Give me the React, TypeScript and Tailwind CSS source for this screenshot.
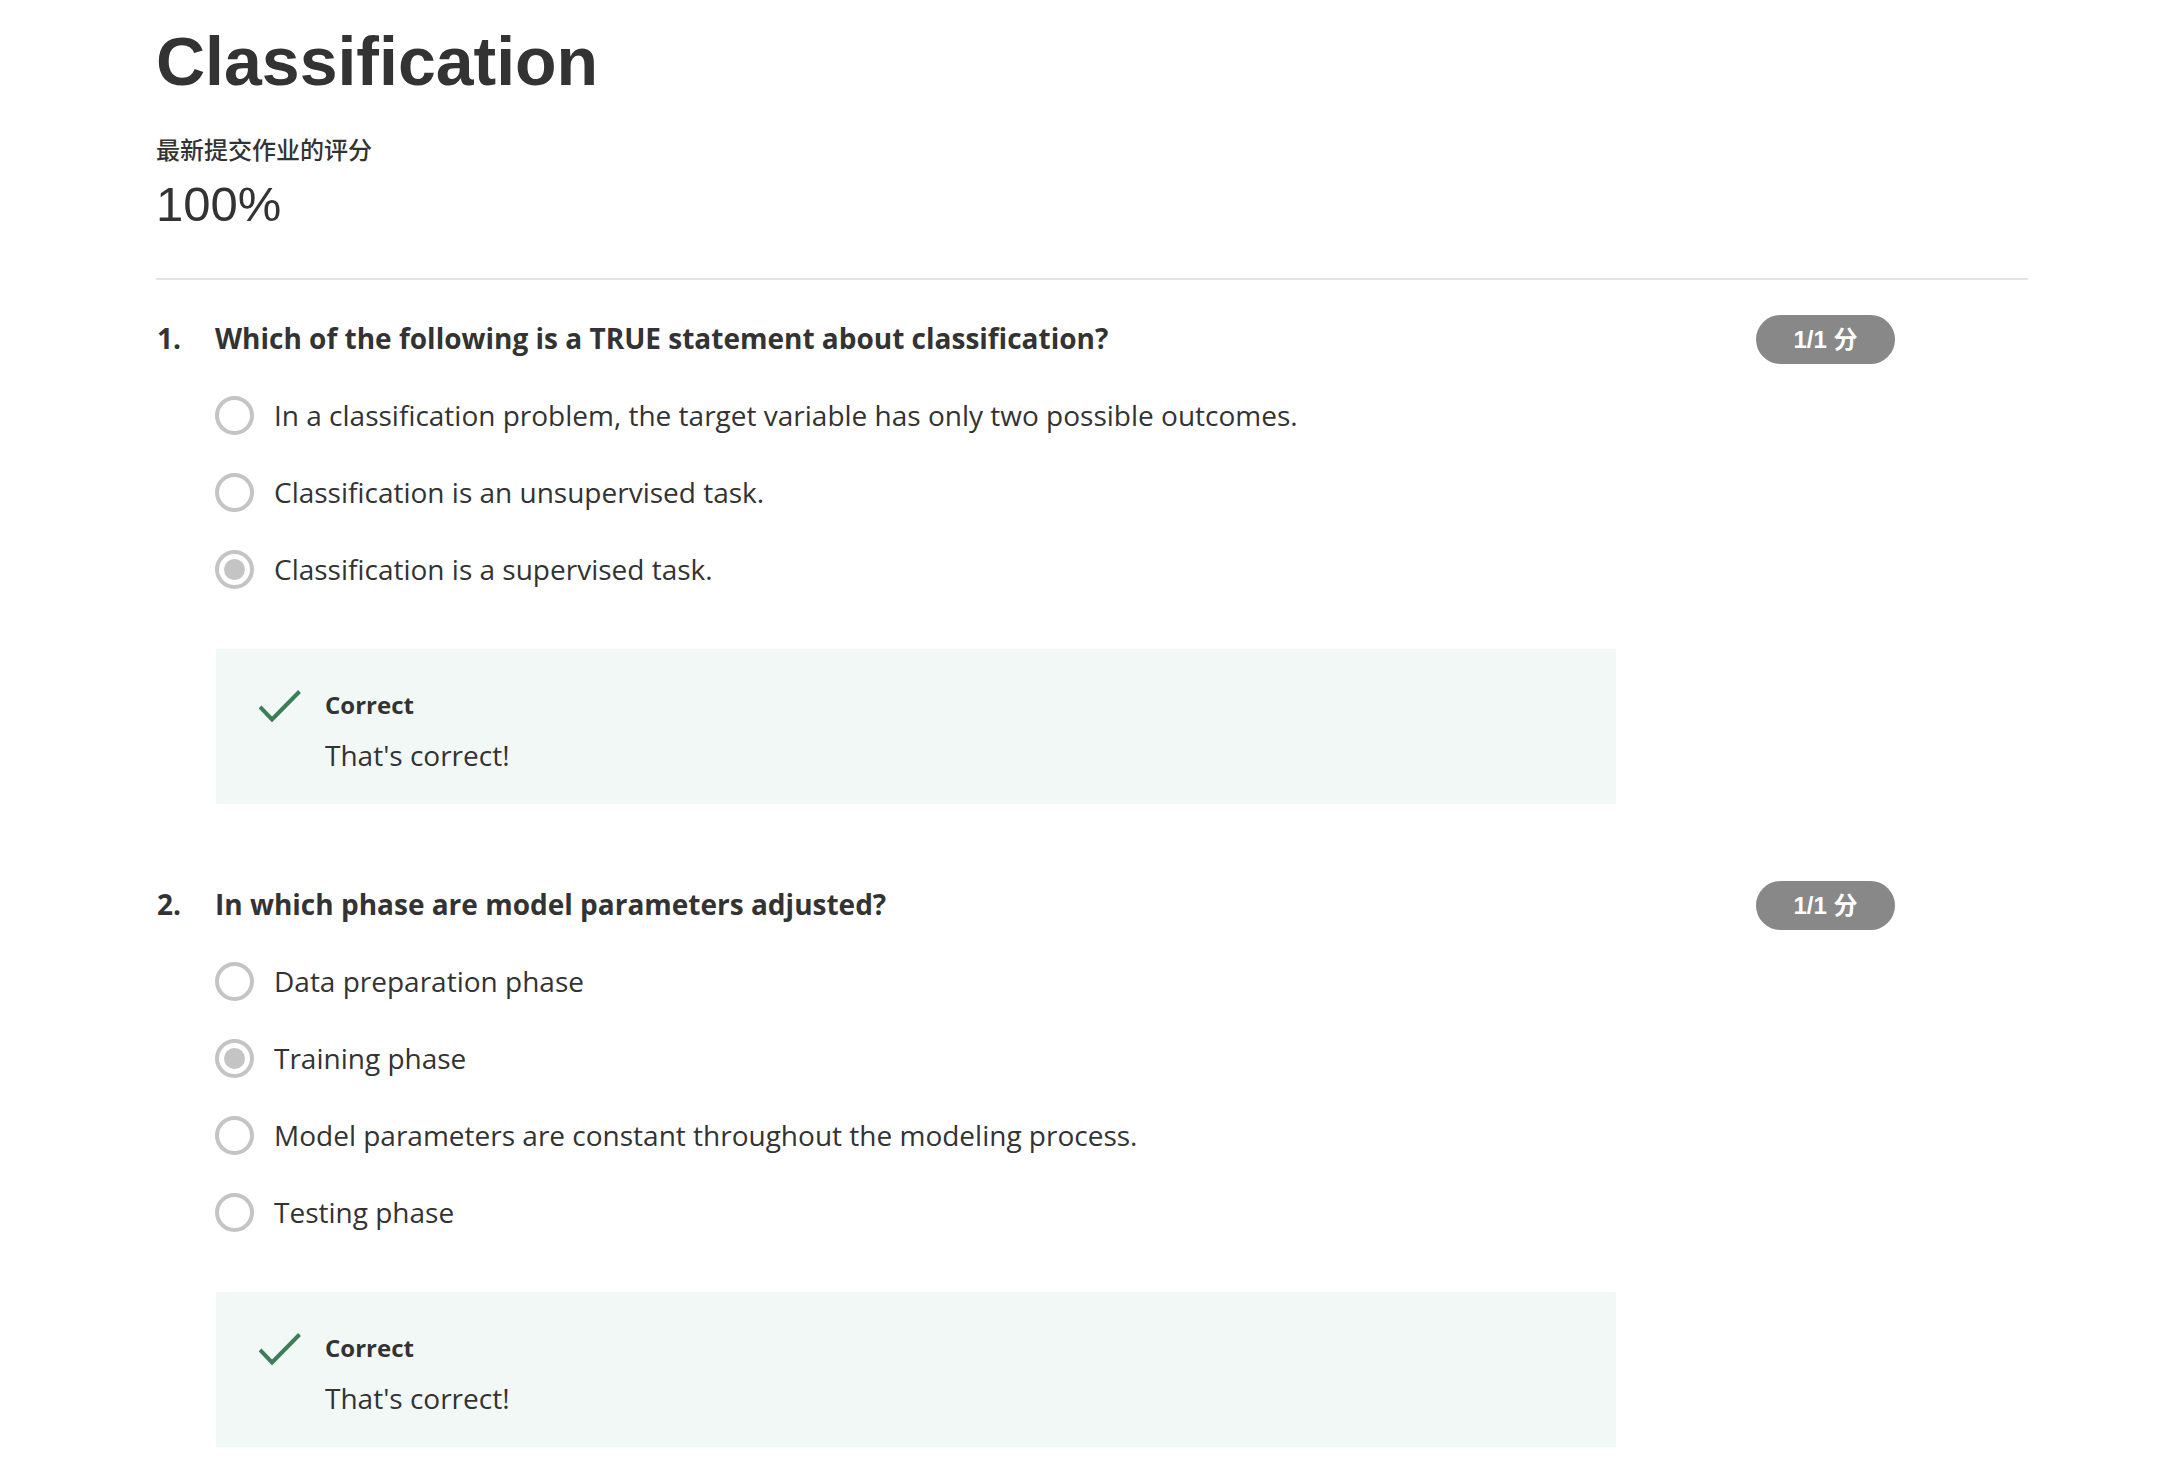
import React from "react";

const body = { fontFamily: '"Open Sans", "Noto Sans CJK SC", sans-serif' };

function Radio({ checked }: { checked?: boolean }) {
  return (
    <div className="flex h-[39px] w-[39px] shrink-0 items-center justify-center rounded-full border-[4px] border-[#c4c4c4]">
      {checked && <div className="h-[21px] w-[21px] rounded-full bg-[#c4c4c4]" />}
    </div>
  );
}

function Check() {
  return (
    <svg width="42" height="32" viewBox="0 0 42 32" className="shrink-0">
      <polyline points="1,17 13,29.5 40.5,1.5" fill="none" stroke="#3c7e58" strokeWidth="4" />
    </svg>
  );
}

function Badge() {
  return (
    <div
      className="mr-[133px] flex h-[49px] w-[139px] items-center justify-center rounded-full bg-[#888888] text-[24px] font-bold text-white"
      style={{ fontFamily: '"Liberation Sans", "Noto Sans CJK SC", sans-serif' }}
    >
      1/1 分
    </div>
  );
}

function Question({
  num,
  text,
  options,
  selected,
}: {
  num: string;
  text: string;
  options: string[];
  selected: number;
}) {
  return (
    <div>
      <div className="flex h-[49px] items-center justify-between">
        <div className="mb-[4px] flex text-[28px] font-bold leading-[40px] text-[#333333]">
          <span className="w-[59px] pl-[1px]">{num}</span>
          <span>{text}</span>
        </div>
        <Badge />
      </div>
      <div className="mt-[32px] flex flex-col gap-[38px] pl-[59px]">
        {options.map((o, i) => (
          <div key={i} className="flex h-[39px] items-center gap-[20px]">
            <Radio checked={i === selected} />
            <span className="text-[28px] leading-[39px] text-[#333333]">{o}</span>
          </div>
        ))}
      </div>
      <div className="ml-[60px] mt-[60px] flex h-[155px] w-[1400px] bg-[#f2f8f6] pl-[43px] pt-[40px]">
        <div className="pt-[1px]">
          <Check />
        </div>
        <div className="ml-[24px] flex flex-col">
          <span className="text-[24px] font-bold leading-[32px] text-[#333333]">Correct</span>
          <span className="mt-[15px] text-[28px] leading-[38px] text-[#333333]">That's correct!</span>
        </div>
      </div>
    </div>
  );
}

export default function App() {
  return (
    <div className="min-h-screen w-full bg-white" style={body}>
      <div className="px-[156px] pt-[23px]">
        <h1
          className="text-[68px] font-bold leading-[76px] text-[#333333]"
          style={{ fontFamily: '"Liberation Sans", Arial, sans-serif' }}
        >
          Classification
        </h1>
        <div
          className="mt-[34px] text-[24px] font-medium leading-[32px] text-[#333333]"
          style={{ fontFamily: '"Noto Sans CJK SC", sans-serif' }}
        >
          最新提交作业的评分
        </div>
        <div
          className="mt-[11px] text-[49px] leading-[56px] text-[#333333]"
          style={{ fontFamily: '"Liberation Sans", Arial, sans-serif' }}
        >
          100%
        </div>
        <div className="mt-[46px] h-[2px] w-full bg-[#e3e3e3]" />
        <div className="mt-[35px]">
          <Question
            num="1."
            text="Which of the following is a TRUE statement about classification?"
            options={[
              "In a classification problem, the target variable has only two possible outcomes.",
              "Classification is an unsupervised task.",
              "Classification is a supervised task.",
            ]}
            selected={2}
          />
        </div>
        <div className="mt-[77px]">
          <Question
            num="2."
            text="In which phase are model parameters adjusted?"
            options={[
              "Data preparation phase",
              "Training phase",
              "Model parameters are constant throughout the modeling process.",
              "Testing phase",
            ]}
            selected={1}
          />
        </div>
      </div>
    </div>
  );
}
